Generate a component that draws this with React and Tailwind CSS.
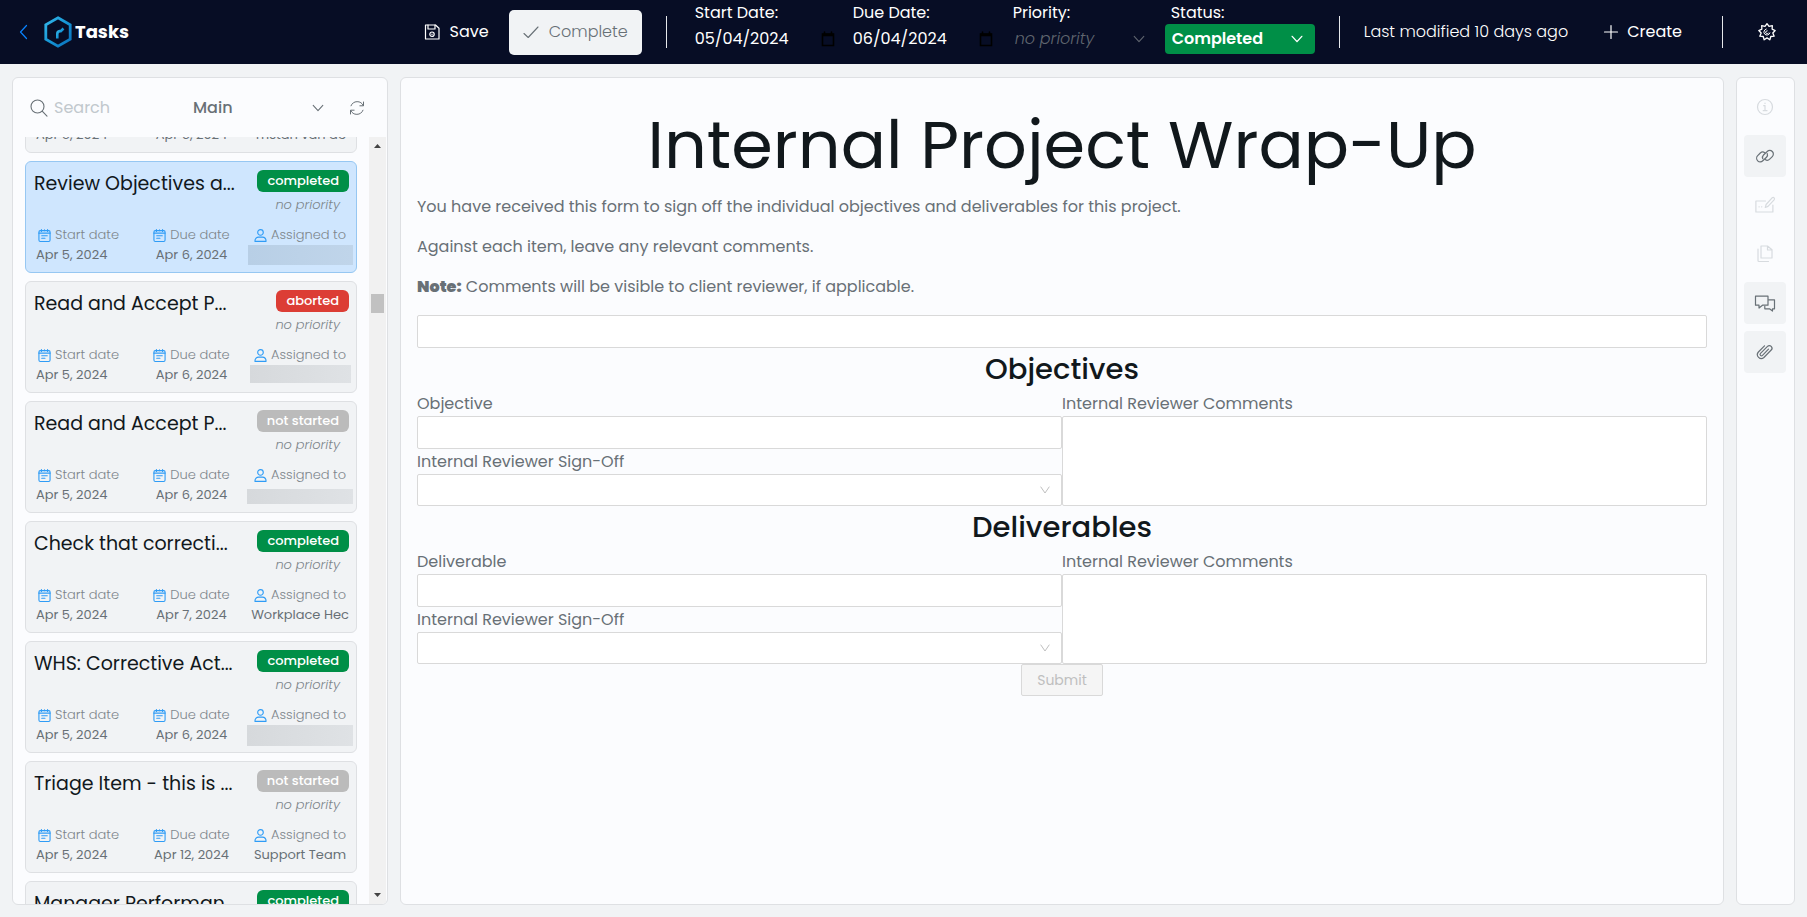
import React from "react";

const FONT = "font-['Poppins','Inter','Liberation_Sans',sans-serif]";

function Icon({ className, width = 1.5, box = 24, children }) {
  return (
    <svg
      viewBox={`0 0 ${box} ${box}`}
      className={className}
      fill="none"
      stroke="currentColor"
      strokeWidth={width}
      strokeLinecap="round"
      strokeLinejoin="round"
      aria-hidden="true"
    >
      {children}
    </svg>
  );
}

const ChevronDown = ({ className, width = 1.2, d = "M2.5 5 8 11l5.5-6" }) => (
  <Icon box={16} width={width} className={className}>
    <path d={d} />
  </Icon>
);

const CalendarSolid = () => (
  <Icon box={16} width={1.6} className="size-4">
    <path d="M2.5 3h11v11.5h-11zM4.5 1v2M11.5 1v2" strokeLinejoin="miter" />
    <path d="M2.5 4h11" strokeWidth="2.5" strokeLinecap="butt" />
  </Icon>
);

const CalendarLines = () => (
  <Icon box={14} width={1.2} className="size-[13px] shrink-0 text-[#2f9cf6]">
    <rect x="1" y="1.8" width="12" height="11.6" rx="1.5" />
    <path d="M3.7.6v2M10.3.6v2M7 .8v1M1 4.5h12" />
    <path d="M4 7.3h6M4 9.9h3.5" />
  </Icon>
);

const Person = () => (
  <Icon box={14} width={1.2} className="size-[13px] shrink-0 text-[#2f9cf6]">
    <circle cx="7" cy="3.7" r="3" />
    <path d="M1 13.3c0-3 1.900-4.500 4-4.500h4c2.100 0 4 1.500 4 4.500z" />
  </Icon>
);

// Nine-pointed cog outline centred on (9, 9).
const COG_POINTS = Array.from({ length: 18 }, (_, i) => {
  const angle = (i * Math.PI) / 9 - Math.PI / 2;
  const r = i % 2 ? 5.9 : 8.3;
  return `${(9 + r * Math.cos(angle)).toFixed(2)},${(9 + r * Math.sin(angle)).toFixed(2)}`;
}).join(" ");

function Logo() {
  return (
    <svg viewBox="0 0 28 32" className="h-8 w-7" fill="none" aria-hidden="true">
      <defs>
        <linearGradient id="brand" x1="0" y1="0" x2="1" y2="1">
          <stop offset="0" stopColor="#35b8ea" />
          <stop offset="0.5" stopColor="#1596d6" />
          <stop offset="1" stopColor="#0a6fbb" />
        </linearGradient>
      </defs>
      <path d="M14 1.8 26.2 8.8v14.4L14 30.2 1.8 23.2V8.8z" stroke="url(#brand)" strokeWidth="2.8" />
      <path d="M13.3 22.5v-4.500q0-2.600 2.500-2.900h1l2.700-2.600" stroke="url(#brand)" strokeWidth="2.600" />
    </svg>
  );
}

function Divider() {
  return <div className="h-8 w-px shrink-0 bg-[#e6e8eb]" />;
}

function DateField({ id, label, value }) {
  return (
    <div className="w-[158px] pl-1">
      <label htmlFor={id} className="block h-6 leading-[26px]">
        {label}
      </label>
      <div className="flex h-[30px] items-center justify-between pr-[13px]">
        <input id={id} defaultValue={value} className="w-[108px] bg-transparent outline-none" />
        <button type="button" aria-label={`Pick ${label}`} className="text-black">
          <CalendarSolid />
        </button>
      </div>
    </div>
  );
}

function Header() {
  return (
    <header className="flex h-16 shrink-0 items-center whitespace-nowrap bg-[#070d25] text-base text-white">
      <a href="#back" aria-label="Back" className="ml-4 text-[#0a84ff]">
        <Icon box={16} width={1.2} className="size-4">
          <path d="M10.5 1.5 4.5 8l6 6.500" />
        </Icon>
      </a>
      <a href="#tasks" className="ml-3 flex items-center gap-[3px] text-lg font-bold">
        <Logo />
        Tasks
      </a>
      <div className="flex flex-1 items-center justify-end">
        <button type="button" className="flex items-center gap-2.5 px-5">
          <Icon box={16} width={1.2} className="size-4">
            <path d="M1.5 1h10L15 4.200V15H1.500z" />
            <path d="M4 1v4h7V1" />
            <circle cx="8" cy="10.2" r="2.2" />
            <path d="M8 10.200v.2" />
          </Icon>
          Save
        </button>
        <button
          type="button"
          className="flex h-[45px] w-[133px] items-center gap-2.5 rounded-[5px] bg-[#f1f3f5] pl-3.5 font-light text-[#687076]"
        >
          <Icon box={16} width={1.1} className="size-4">
            <path d="m1 9.500 4.200 4L15 3" />
          </Icon>
          Complete
        </button>
      </div>
      <div className="ml-6 flex items-center">
        <Divider />
        <div className="ml-6 flex h-16 items-start">
          <DateField id="start" label="Start Date:" value="05/04/2024" />
          <DateField id="due" label="Due Date:" value="06/04/2024" />
          <div className="w-[158px]">
            <label htmlFor="priority" className="block h-6 pl-1.5 leading-[26px]">
              Priority:
            </label>
            <div className="relative w-[150px] text-[#60666f]">
              <select
                id="priority"
                className="h-[30px] w-full appearance-none bg-transparent pl-2 font-light italic outline-none"
              >
                <option>no priority</option>
              </select>
              <ChevronDown className="pointer-events-none absolute right-[11px] top-2 size-3.5" />
            </div>
          </div>
          <div>
            <label htmlFor="status" className="block h-6 pl-1.5 leading-[26px]">
              Status:
            </label>
            <div className="relative w-[150px]">
              <select
                id="status"
                className="h-[30px] w-full appearance-none rounded bg-[#008f47] pl-[7px] font-semibold outline-none"
              >
                <option>Completed</option>
              </select>
              <ChevronDown width={1.6} className="pointer-events-none absolute right-[11px] top-2 size-3.5" />
            </div>
          </div>
        </div>
        <div className="ml-6 flex items-center">
          <Divider />
          <span className="pl-6 font-light">Last modified 10 days ago</span>
        </div>
        <button type="button" className="ml-[35px] flex items-center gap-2">
          <Icon box={16} width={1.2} className="size-4">
            <path d="M8 1.500v13M1.500 8h13" />
          </Icon>
          Create
        </button>
        <div className="ml-10 flex items-center">
          <Divider />
          <button type="button" aria-label="Settings" className="ml-[35px] mr-[31px]">
            <Icon box={18} width={1.3} className="size-[18px]">
              <polygon points={COG_POINTS} />
              <path d="M8.200 6a3.100 3.100 0 1 0 3.700 4M9.200 7.800a1.500 1.500 0 1 0 1.300 2.200" strokeWidth="1" />
            </Icon>
          </button>
        </div>
      </div>
    </header>
  );
}

const TASKS = [
  { title: "Read and Accept P...", status: "completed", due: "Apr 6, 2024", who: "Tristan van de" },
  { title: "Review Objectives a...", status: "completed", due: "Apr 6, 2024", selected: true, mask: "h-5 w-[105px]" },
  { title: "Read and Accept P...", status: "aborted", due: "Apr 6, 2024", mask: "h-[18px] w-[101px]" },
  { title: "Read and Accept P...", status: "not started", due: "Apr 6, 2024", mask: "mt-1 h-[15px] w-[106px]" },
  { title: "Check that correcti...", status: "completed", due: "Apr 7, 2024", who: "Workplace Hec" },
  { title: "WHS: Corrective Act...", status: "completed", due: "Apr 6, 2024", mask: "h-[21px] w-[106px]" },
  { title: "Triage Item - this is ...", status: "not started", due: "Apr 12, 2024", who: "Support Team" },
  { title: "Manager Performan...", status: "completed", due: "Apr 12, 2024", who: "Support Team" },
];

const BADGE = {
  completed: "bg-[#008f47]",
  aborted: "bg-[#dc3d35]",
  "not started": "bg-[#bbbbbb]",
};

function TaskCard({ task }) {
  return (
    <li
      className={`flex h-28 shrink-0 flex-col rounded-md border ${
        task.selected ? "border-[#96c7f2] bg-[#cfe6fe]" : "border-[#dee0e3] bg-[#f1f3f5]"
      }`}
    >
      <div className="flex items-start justify-between pl-2 pr-[7px] pt-2">
        <h2 className="whitespace-nowrap text-[19px] leading-7 text-[#11181c]">{task.title}</h2>
        <span
          className={`flex h-[22px] items-center rounded-md px-2.5 text-[13px] font-medium text-white ${BADGE[task.status]}`}
        >
          {task.status}
        </span>
      </div>
      <p className="-mt-[3px] pr-4 text-right text-[13px] font-light italic leading-5 text-[#7e868c]">no priority</p>
      <div className="mt-2.5 flex justify-between pl-2.5 pr-[3px] text-[13px] leading-5 text-[#687076]">
        <div className="w-[100px]">
          <p className="flex items-center gap-1 pl-0.5 font-light text-[#7e868c]">
            <CalendarLines />
            Start date
          </p>
          <p>Apr 5, 2024</p>
        </div>
        <div className="w-[90px] text-center">
          <p className="flex items-center justify-center gap-1 font-light text-[#7e868c]">
            <CalendarLines />
            Due date
          </p>
          <p className="whitespace-nowrap">{task.due}</p>
        </div>
        <div className="flex w-[106px] flex-col items-center">
          <p className="flex items-center gap-1 whitespace-nowrap font-light text-[#7e868c]">
            <Person />
            Assigned to
          </p>
          {task.mask ? (
            <div
              className={`${task.mask} bg-linear-to-r ${
                task.selected ? "from-[#b8cfe6] to-[#c0d5ea]" : "from-[#d6d9dc] to-[#dfe2e5]"
              }`}
            />
          ) : (
            <p className="whitespace-nowrap">{task.who}</p>
          )}
        </div>
      </div>
    </li>
  );
}

function Scrollbar() {
  return (
    <div className="flex w-[17px] shrink-0 flex-col items-center bg-[#f1f1f1]" aria-hidden="true">
      <svg viewBox="0 0 17 17" className="size-[17px]">
        <path d="M5 11h7L8.500 7z" fill="#444" />
      </svg>
      <div className="flex-1">
        <div className="mt-[140px] h-[19px] w-[13px] bg-[#c1c1c1]" />
      </div>
      <svg viewBox="0 0 17 17" className="size-[17px]">
        <path d="M5 6h7l-3.500 4z" fill="#444" />
      </svg>
    </div>
  );
}

function Sidebar() {
  return (
    <aside className="flex w-[376px] shrink-0 flex-col overflow-hidden rounded-md border border-[#dee0e3] bg-[#fbfcfe]">
      <div className="flex h-[59px] shrink-0 items-center pl-[17px] text-base text-[#687076]">
        <Icon box={18} width={1.1} className="size-[18px] shrink-0">
          <circle cx="7.5" cy="7.5" r="6.5" />
          <path d="m12.200 12.200 4.800 5" />
        </Icon>
        <input
          aria-label="Search"
          placeholder="Search"
          className="ml-1.5 w-[131px] bg-transparent outline-none placeholder:text-[#c1c8cd]"
        />
        <div className="relative w-[154px]">
          <select
            aria-label="View"
            className="h-8 w-full appearance-none bg-transparent pl-2 font-medium outline-none"
          >
            <option>Main</option>
          </select>
          <ChevronDown className="pointer-events-none absolute right-3.5 top-[9px] size-3.5" />
        </div>
        <button type="button" aria-label="Refresh" className="ml-2.5">
          <Icon box={16} width={1} className="size-4">
            <path d="M14.500 2v3.800h-3.600M1.500 14v-3.800h3.600" />
            <path d="M14.300 5.600A6.700 6.700 0 0 0 2 5.800M1.700 10.400A6.700 6.700 0 0 0 14 10.200" />
          </Icon>
        </button>
      </div>
      <div className="flex min-h-0 flex-1 overflow-hidden pr-px">
        <ul className="-mt-24 flex flex-1 flex-col gap-2 px-3">
          {TASKS.map((task, i) => (
            <TaskCard key={i} task={task} />
          ))}
        </ul>
        <Scrollbar />
      </div>
    </aside>
  );
}

function ReviewSection({ title, item }) {
  const id = item.toLowerCase();
  const box = "block w-full rounded-[2px] border border-[#d9d9d9] bg-white px-2 outline-none";
  return (
    <section>
      <h2 className="text-center text-[29px] font-medium leading-[43px] text-[#11181c]">{title}</h2>
      <div className="grid grid-cols-2">
        <div>
          <label htmlFor={id} className="block leading-[25px]">
            {item}
          </label>
          <input id={id} className={`h-[33px] ${box}`} />
          <label htmlFor={`${id}-signoff`} className="block leading-[25px]">
            Internal Reviewer Sign-Off
          </label>
          <div className="relative">
            <select id={`${id}-signoff`} className={`h-8 appearance-none ${box}`} defaultValue="">
              <option value=""></option>
            </select>
            <ChevronDown
              d="M2.500 4 8 12l5.500-8"
              className="pointer-events-none absolute right-[11px] top-2.5 size-3 text-[#b8b8b8]"
            />
          </div>
        </div>
        <div className="flex flex-col">
          <label htmlFor={`${id}-comments`} className="block leading-[25px]">
            Internal Reviewer Comments
          </label>
          <textarea id={`${id}-comments`} className={`flex-1 resize-none ${box}`} />
        </div>
      </div>
    </section>
  );
}

function Form() {
  return (
    <main className="min-w-0 flex-1 rounded-md border border-[#dee0e3] bg-[#fbfcfe] px-4 pt-[25px] text-base leading-6 text-[#687076]">
      <h1 className="mb-2 text-center text-[67px] leading-[84px] text-[#11181c]">Internal Project Wrap-Up</h1>
      <p className="mb-4">
        You have received this form to sign off the individual objectives and deliverables for this project.
      </p>
      <p className="mb-4">Against each item, leave any relevant comments.</p>
      <p className="mb-4">
        <strong className="font-black">Note:</strong> Comments will be visible to client reviewer, if applicable.
      </p>
      <input
        aria-label="Notes"
        className="block h-[33px] w-full rounded-[2px] border border-[#d9d9d9] bg-white px-2 outline-none"
      />
      <ReviewSection title="Objectives" item="Objective" />
      <ReviewSection title="Deliverables" item="Deliverable" />
      <button
        type="button"
        disabled
        className="mx-auto block h-8 rounded-[2px] border border-[#d9d9d9] bg-[#f5f5f5] px-[15px] text-sm text-[#bfbfbf]"
      >
        Submit
      </button>
    </main>
  );
}

const TOOLS = [
  {
    label: "Info",
    icon: (
      <>
        <circle cx="10" cy="10" r="7.5" />
        <path d="M8.700 8.700H10v4.800M8.200 13.700h3.800M10 6.200v.3" />
      </>
    ),
  },
  {
    label: "Links",
    active: true,
    icon: (
      <>
        <path d="M7.800 12.700a3.300 3.300 0 0 1 .7-3.700l3.700-3.500a3.600 3.600 0 0 1 5.100 0 3.600 3.600 0 0 1 0 5.100l-2.600 2.600a3.600 3.600 0 0 1-4.500.4" />
        <path d="M12.200 7.500a3.300 3.300 0 0 1-.7 3.700l-3.700 3.600a3.600 3.600 0 0 1-5.100-5.100l2.600-2.700a3.600 3.600 0 0 1 4.500-.3" />
      </>
    ),
  },
  {
    label: "Edit form",
    icon: (
      <>
        <path d="M10.500 6H.900v11h17v-7" />
        <path d="m10.300 12.500.8-3 6-6.700q1.200-.9 2 0t0 2l-6.100 6.600z" />
        <path d="M4 11.800h.2M6.600 11.800h.2" />
      </>
    ),
  },
  {
    label: "Copy",
    icon: (
      <>
        <path d="M6 2h6.500L17 5.800V14H6zM12.500 2v4H17" />
        <path d="M3 5v11.500q0 1 1 1h9.500" />
      </>
    ),
  },
  {
    label: "Comments",
    active: true,
    icon: (
      <>
        <path d="M.5 3.200h12.500v9H7.500L4 15v-2.800H.5z" />
        <path d="M13.500 6.800h6v9H17.500v2.300l-3-2.300H9.800v-2.500" />
      </>
    ),
  },
  {
    label: "Attachments",
    active: true,
    icon: (
      <path d="m13.500 7.200-6 6.100a1.400 1.400 0 0 1-2-2l7-7a2.600 2.600 0 0 1 3.700 3.700l-7.300 7.500a3.900 3.900 0 0 1-5.500-5.500l6.100-6.200" />
    ),
  },
];

function Toolbar() {
  return (
    <nav
      aria-label="Task tools"
      className="flex w-[59px] shrink-0 flex-col items-start gap-[7px] rounded-md border border-[#dee0e3] bg-[#fbfcfe] pl-[7px] pt-2"
    >
      {TOOLS.map(({ label, active, icon }) => (
        <button
          key={label}
          type="button"
          aria-label={label}
          className={`flex size-[42px] items-center justify-center rounded ${
            active ? "bg-[#f1f3f5] text-[#687076]" : "text-[#d7dbdf]"
          }`}
        >
          <Icon box={20} width={1.2} className="size-5 overflow-visible">
            {icon}
          </Icon>
        </button>
      ))}
    </nav>
  );
}

export default function App() {
  return (
    <div className={`flex h-screen flex-col bg-[#f1f3f5] ${FONT}`}>
      <Header />
      <div className="flex min-h-0 flex-1 gap-3 p-3 pt-[13px]">
        <Sidebar />
        <Form />
        <Toolbar />
      </div>
    </div>
  );
}
